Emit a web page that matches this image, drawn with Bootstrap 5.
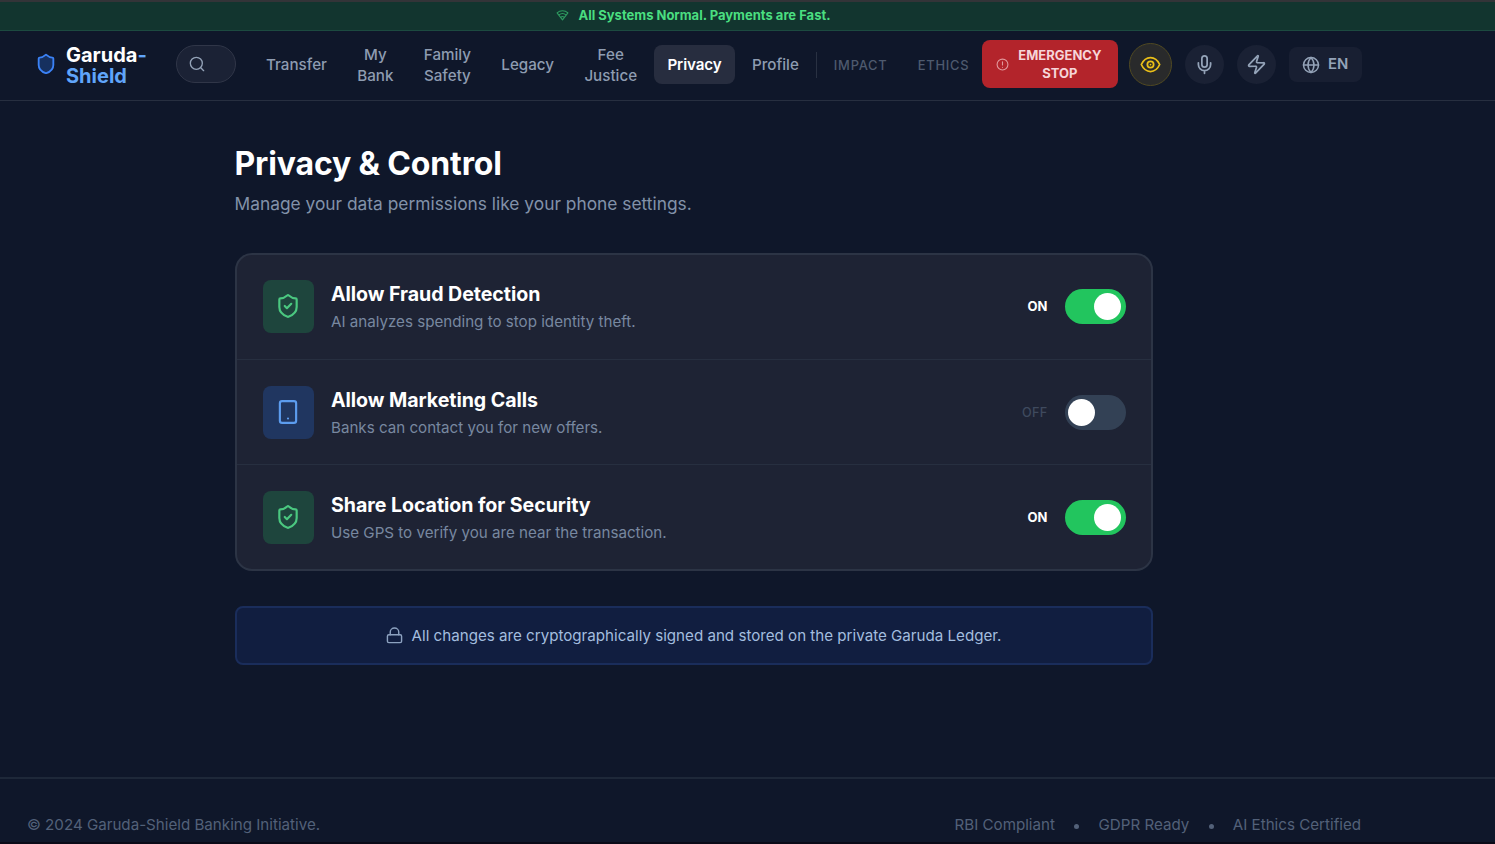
<!DOCTYPE html>
<html lang="en">
<head>
    <meta charset="UTF-8">
    <meta name="viewport" content="width=device-width, initial-scale=1.0">
    <title>Garuda-Shield - Privacy &amp; Control</title>
    <link href="https://cdn.jsdelivr.net/npm/bootstrap@5.3.0/dist/css/bootstrap.min.css" rel="stylesheet">

    <style>
        body {
            background: #0f172a;
            color: #fff;
            font-family: Inter, "Liberation Sans", sans-serif;
            height: 844px;
            overflow: hidden;
            border-bottom: 2px solid #0a0a18;
        }
        svg {
            fill: none;
            stroke: currentColor;
            stroke-width: 2;
            stroke-linecap: round;
            stroke-linejoin: round;
            flex-shrink: 0;
        }
        .page-width { width: 1387px; }

        .status-bar {
            height: 31px;
            background: #12352f;
            border-top: 2px solid #333438;
            border-bottom: 1px solid #1c4a40;
            color: #4ade80;
            font-size: 13px;
            font-weight: 700;
        }
        .status-bar svg { color: #2e9b60; margin: 0 9px 2px 0; }

        .top-nav {
            height: 70px;
            border-bottom: 1px solid #272f40;
        }
        .top-nav .page-width { height: 67px; padding-left: 35px; }
        .logo-mark { color: #3b82f6; margin-bottom: 2px; }
        .logo-text {
            width: 82px;
            margin: 2px 0 0 9px;
            font-size: 20px;
            font-weight: 700;
            line-height: 21px;
        }
        .logo-text span { color: #60a5fa; }
        .search-pill {
            width: 60px;
            height: 38px;
            margin: 0 0 1px 28px;
            padding-left: 12px;
            background: #1b2235;
            border: 1px solid #303648;
            color: #94a3b8;
        }
        .menu-links { margin-left: 17px; }
        .menu-item {
            padding: 9px 13px;
            margin-right: 4.3px;
            color: #8e9cb1;
            font-size: 15.2px;
            font-weight: 500;
            line-height: 21px;
            text-align: center;
            text-decoration: none;
            border-radius: 8px;
        }
        .menu-item.current {
            background: #272d3f;
            color: #fff;
            font-weight: 600;
            letter-spacing: -.1px;
        }
        .menu-item.minor {
            color: #4e5a6e;
            font-size: 12.9px;
            letter-spacing: .75px;
            padding-top: 10px;
            padding-bottom: 8px;
        }
        .divider { width: 1px; height: 26px; background: #293142; }
        .stop-btn {
            width: 136px;
            height: 48px;
            margin-bottom: 2px;
            padding-right: 3px;
            background: #b3242b;
            color: #f6d5d9;
            border-radius: 8px;
            font-size: 13px;
            font-weight: 700;
            line-height: 18px;
        }
        .stop-btn svg { margin: 2px 9px 0 0; color: #e2999d; }
        .tool-btn {
            width: 39px;
            height: 39px;
            background: #1a2134;
            color: #94a3b8;
        }
        .tool-btn.eye {
            width: 43px;
            height: 43px;
            background: #292a2b;
            border: 1px solid #504922;
            color: #eabf18;
        }
        .toolbar { gap: 12.8px; margin-left: 11px; }
        .lang-btn {
            width: 73px;
            height: 35px;
            background: #181f32;
            color: #94a3b8;
            border-radius: 8px;
            font-size: 14.9px;
            font-weight: 600;
        }

        .content-col { width: 918px; padding-top: 42px; }
        .page-title {
            margin: 0;
            font-size: 32px;
            font-weight: 700;
            line-height: 42px;
            letter-spacing: -.15px;
        }
        .page-text {
            margin: 6px 0 0;
            color: #8292a9;
            font-size: 17.35px;
            line-height: 26px;
        }
        .permissions {
            margin-top: 36px;
            background: #1e2334;
            border: 2px solid #2c3445;
            border-radius: 17px;
            height: 318px;
        }
        .permission {
            height: 105px;
            padding: 1px 25px 0 26px;
        }
        .permission:first-child { height: 104px; padding: 0 25px 1px 26px; }
        .permission + .permission { border-top: 1px solid #272f40; }
        .permission-icon {
            width: 51px;
            height: 53px;
            margin: 0 17.5px 1px 0;
            padding: 0 1px 1px 0;
            border-radius: 8px;
            background: #1e453d;
            color: #4bc880;
        }
        .permission-icon.blue { background: #203660; color: #5c9cee; }
        .permission-name {
            font-size: 19.6px;
            font-weight: 700;
            line-height: 28px;
            letter-spacing: -.05px;
        }
        .permission-note {
            color: #7888a0;
            font-size: 15.15px;
            line-height: 24px;
            margin-top: 2px;
        }
        .state { font-size: 13px; font-weight: 700; margin-right: 17px; }
        .state.off { color: #3f4a5e; font-size: 12.7px; font-weight: 500; letter-spacing: .3px; }
        .toggle {
            width: 61px;
            height: 35px;
            padding: 0 5px 1px 3px;
            background: #334155;
        }
        .toggle.on { background: #22c55e; justify-content: flex-end; }
        .toggle span { width: 27px; height: 27px; background: #fff; }

        .ledger-note {
            height: 59px;
            margin-top: 35px;
            padding-top: 1px;
            background: #111e40;
            border: 2px solid #1a2d5b;
            border-radius: 8px;
            color: #a3bddf;
            font-size: 15.15px;
        }
        .ledger-note svg { color: #8da2c0; margin: 0 9px 2px 0; }

        .page-footer {
            margin-top: 112px;
            border-top: 2px solid #1e2839;
            color: #536179;
            font-size: 15.15px;
        }
        .page-footer .page-width { padding: 35px 26px 0 27px; }
        .dot { width: 5px; height: 5px; background: #536179; margin: 2px 19.3px 0; }
    </style>
</head>
<body>

    <!-- System status -->
    <div class="status-bar">
        <div class="page-width h-100 d-flex align-items-center justify-content-center">
            <svg width="13" height="12" viewBox="0 0 24 22"><path d="M2 7a15 15 0 0 1 20 0M5.5 11a10 10 0 0 1 13 0M9 15a5 5 0 0 1 6 0M2 7l10 13L22 7"/><path d="M12 19h.01"/></svg>
            All Systems Normal. Payments are Fast.
        </div>
    </div>

    <!-- Navbar -->
    <nav class="top-nav">
        <div class="page-width d-flex align-items-center">
            <svg class="logo-mark" width="22" height="24" viewBox="0 0 24 24"><path fill="#16305f" d="M20 13c0 5-3.5 7.5-7.66 8.95a1 1 0 0 1-.67-.01C7.5 20.5 4 18 4 13V6a1 1 0 0 1 1-1c2 0 4.5-1.2 6.24-2.72a1.17 1.17 0 0 1 1.52 0C14.51 3.81 17 5 19 5a1 1 0 0 1 1 1z"/></svg>
            <div class="logo-text">
                <div>Garuda<span>-</span></div>
                <div><span>Shield</span></div>
            </div>
            <div class="search-pill rounded-pill d-flex align-items-center">
                <svg width="16" height="16" viewBox="0 0 24 24"><circle cx="11" cy="11" r="9"/><path d="m22 22-4.3-4.3"/></svg>
            </div>
            <div class="menu-links d-flex align-items-center">
                <a class="menu-item" href="#">Transfer</a>
                <a class="menu-item" href="#">My<br>Bank</a>
                <a class="menu-item" href="#">Family<br>Safety</a>
                <a class="menu-item" href="#">Legacy</a>
                <a class="menu-item" href="#">Fee<br>Justice</a>
                <a class="menu-item current" href="#">Privacy</a>
                <a class="menu-item me-0" href="#">Profile</a>
                <div class="divider ms-1"></div>
                <a class="menu-item minor ms-1" href="#">IMPACT</a>
                <a class="menu-item minor me-0" href="#">ETHICS</a>
            </div>
            <div class="stop-btn d-flex align-items-center justify-content-center text-center">
                <svg width="13" height="13" viewBox="0 0 24 24"><circle cx="12" cy="12" r="10"/><path d="M12 7v6M12 17h.01"/></svg>
                <span>EMERGENCY<br>STOP</span>
            </div>
            <div class="toolbar d-flex align-items-center">
                <div class="tool-btn eye rounded-circle d-flex align-items-center justify-content-center">
                    <svg width="21" height="21" viewBox="0 0 24 24"><path d="M1.5 12C4 6.500 7.500 4 12 4s8 2.500 10.500 8C20 17.500 16.500 20 12 20S4 17.500 1.500 12z"/><circle cx="12" cy="12" r="3.600"/><path d="M12 12h.01"/></svg>
                </div>
                <div class="tool-btn rounded-circle d-flex align-items-center justify-content-center">
                    <svg width="21" height="21" viewBox="0 0 24 24"><path d="M12 19v3M19 10v2a7 7 0 0 1-14 0v-2"/><rect x="9" y="2" width="6" height="13" rx="3"/></svg>
                </div>
                <div class="tool-btn rounded-circle d-flex align-items-center justify-content-center">
                    <svg width="21" height="21" viewBox="0 0 24 24"><path d="M4 14a1 1 0 0 1-.78-1.63l9.9-10.2a.5.5 0 0 1 .86.46l-1.92 6.02A1 1 0 0 0 13 10h7a1 1 0 0 1 .78 1.63l-9.9 10.2a.5.5 0 0 1-.86-.46l1.92-6.02A1 1 0 0 0 11 14z"/></svg>
                </div>
                <div class="lang-btn d-flex align-items-center justify-content-center gap-2">
                    <svg width="18" height="18" viewBox="0 0 24 24"><circle cx="12" cy="12" r="10"/><path d="M12 2a14.5 14.5 0 0 0 0 20 14.5 14.5 0 0 0 0-20M2 12h20"/></svg>
                    EN
                </div>
            </div>
        </div>
    </nav>

    <!-- Privacy settings -->
    <main class="page-width">
        <div class="content-col mx-auto">
            <h1 class="page-title">Privacy &amp; Control</h1>
            <p class="page-text">Manage your data permissions like your phone settings.</p>

            <div class="permissions" id="permissions"></div>

            <div class="ledger-note d-flex align-items-center justify-content-center">
                <svg width="17" height="17" viewBox="0 0 24 24"><rect x="2" y="11" width="20" height="11" rx="2"/><path d="M6 11V7a6 5.5 0 0 1 12 0v4"/></svg>
                All changes are cryptographically signed and stored on the private Garuda Ledger.
            </div>
        </div>
    </main>

    <footer class="page-footer">
        <div class="page-width d-flex justify-content-between align-items-center">
            <span class="copyright">© 2024 Garuda-Shield Banking Initiative.</span>
            <div class="d-flex align-items-center">
                <span>RBI Compliant</span>
                <span class="dot rounded-circle"></span>
                <span>GDPR Ready</span>
                <span class="dot rounded-circle"></span>
                <span>AI Ethics Certified</span>
            </div>
        </div>
    </footer>

    <script>
        const shieldIcon = `<svg width="26" height="26" viewBox="0 0 24 24"><path d="M20 13c0 5-3.5 7.5-7.66 8.95a1 1 0 0 1-.67-.01C7.5 20.5 4 18 4 13V6a1 1 0 0 1 1-1c2 0 4.5-1.2 6.24-2.72a1.17 1.17 0 0 1 1.52 0C14.51 3.81 17 5 19 5a1 1 0 0 1 1 1z"/><path d="m9 12 2 2 4-4"/></svg>`;
        const phoneIcon = `<svg width="26" height="26" viewBox="0 0 24 24"><rect x="4.500" y="2" width="15" height="20" rx="2"/><path d="M12 18h.01"/></svg>`;

        const permissions = [
            { name: "Allow Fraud Detection", note: "AI analyzes spending to stop identity theft.", icon: shieldIcon, color: "", on: true },
            { name: "Allow Marketing Calls", note: "Banks can contact you for new offers.", icon: phoneIcon, color: "blue", on: false },
            { name: "Share Location for Security", note: "Use GPS to verify you are near the transaction.", icon: shieldIcon, color: "", on: true }
        ];

        document.getElementById("permissions").innerHTML = permissions.map(p => `
            <div class="permission d-flex align-items-center">
                <div class="permission-icon ${p.color} d-flex align-items-center justify-content-center">${p.icon}</div>
                <div class="me-auto">
                    <div class="permission-name">${p.name}</div>
                    <div class="permission-note">${p.note}</div>
                </div>
                <span class="state ${p.on ? "" : "off"}">${p.on ? "ON" : "OFF"}</span>
                <div class="toggle ${p.on ? "on" : ""} rounded-pill d-flex align-items-center"><span class="rounded-circle"></span></div>
            </div>
        `).join("");
    </script>

    <script src="https://cdn.jsdelivr.net/npm/bootstrap@5.3.0/dist/js/bootstrap.bundle.min.js"></script>
</body>
</html>
